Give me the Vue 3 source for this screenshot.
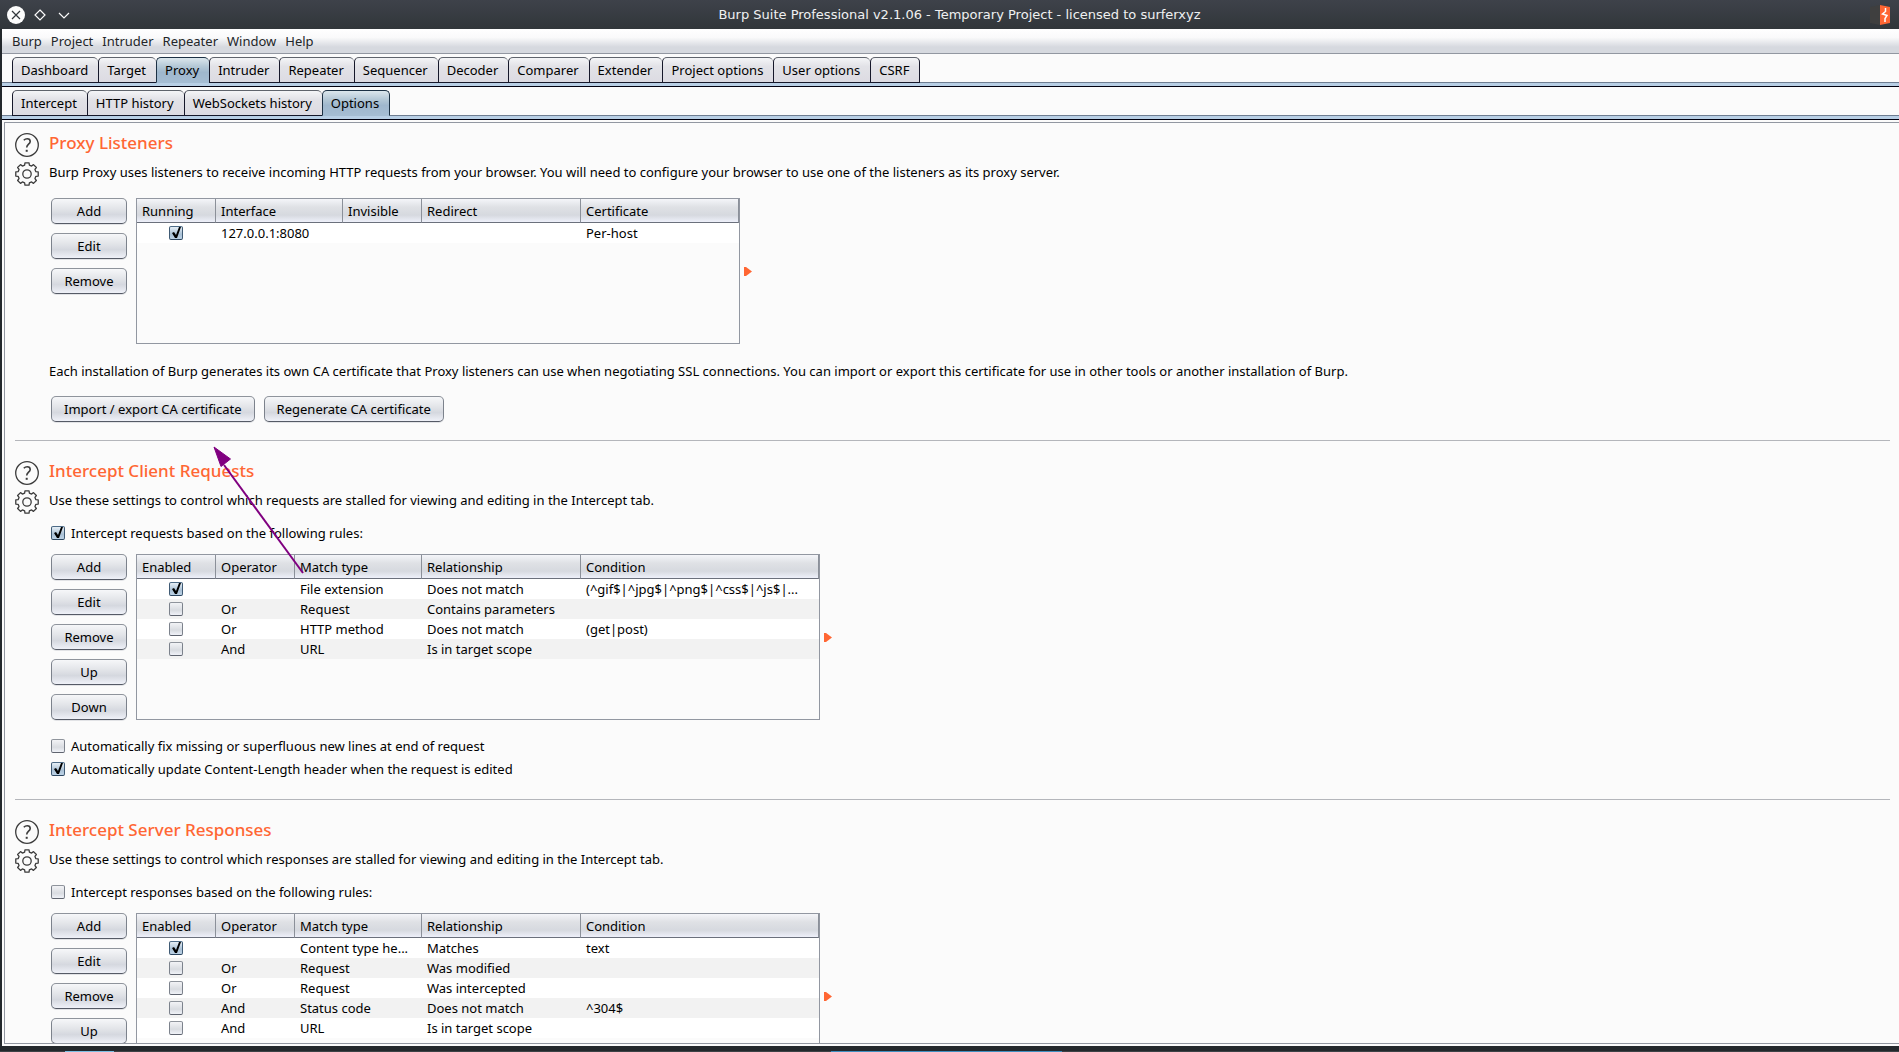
<script setup>
import { ref } from 'vue'

const menus = ['Burp', 'Project', 'Intruder', 'Repeater', 'Window', 'Help']
const tools = ['Dashboard', 'Target', 'Proxy', 'Intruder', 'Repeater', 'Sequencer', 'Decoder', 'Comparer', 'Extender', 'Project options', 'User options', 'CSRF']
const proxyTabs = ['Intercept', 'HTTP history', 'WebSockets history', 'Options']
const activeTool = ref('Proxy')
const activeProxyTab = ref('Options')

const ruleColumns = [
  { name: 'Enabled', size: 'c79' },
  { name: 'Operator', size: 'c79' },
  { name: 'Match type', size: 'c127' },
  { name: 'Relationship', size: 'c159' },
  { name: 'Condition', size: 'rest' }
]

const sections = ref([
  {
    id: 'listeners',
    title: 'Proxy Listeners',
    text: 'Burp Proxy uses listeners to receive incoming HTTP requests from your browser. You will need to configure your browser to use one of the listeners as its proxy server.',
    buttons: ['Add', 'Edit', 'Remove'],
    columns: [
      { name: 'Running', size: 'c79' },
      { name: 'Interface', size: 'c127' },
      { name: 'Invisible', size: 'c79' },
      { name: 'Redirect', size: 'c159' },
      { name: 'Certificate', size: 'rest' }
    ],
    rows: [{ on: true, cells: ['127.0.0.1:8080', '', '', 'Per-host'] }],
    note: 'Each installation of Burp generates its own CA certificate that Proxy listeners can use when negotiating SSL connections. You can import or export this certificate for use in other tools or another installation of Burp.',
    actions: ['Import / export CA certificate', 'Regenerate CA certificate']
  },
  {
    id: 'requests',
    title: 'Intercept Client Requests',
    text: 'Use these settings to control which requests are stalled for viewing and editing in the Intercept tab.',
    toggle: { label: 'Intercept requests based on the following rules:', on: true },
    buttons: ['Add', 'Edit', 'Remove', 'Up', 'Down'],
    columns: ruleColumns,
    rows: [
      { on: true, cells: ['', 'File extension', 'Does not match', '(^gif$|^jpg$|^png$|^css$|^js$|...'] },
      { on: false, cells: ['Or', 'Request', 'Contains parameters', ''] },
      { on: false, cells: ['Or', 'HTTP method', 'Does not match', '(get|post)'] },
      { on: false, cells: ['And', 'URL', 'Is in target scope', ''] }
    ],
    options: [
      { label: 'Automatically fix missing or superfluous new lines at end of request', on: false },
      { label: 'Automatically update Content-Length header when the request is edited', on: true }
    ]
  },
  {
    id: 'responses',
    title: 'Intercept Server Responses',
    text: 'Use these settings to control which responses are stalled for viewing and editing in the Intercept tab.',
    toggle: { label: 'Intercept responses based on the following rules:', on: false },
    buttons: ['Add', 'Edit', 'Remove', 'Up'],
    columns: ruleColumns,
    rows: [
      { on: true, cells: ['', 'Content type he...', 'Matches', 'text'] },
      { on: false, cells: ['Or', 'Request', 'Was modified', ''] },
      { on: false, cells: ['Or', 'Request', 'Was intercepted', ''] },
      { on: false, cells: ['And', 'Status code', 'Does not match', '^304$'] },
      { on: false, cells: ['And', 'URL', 'Is in target scope', ''] }
    ]
  }
])

// Outline of an eight-toothed cog centred on 12,12
const cog = (() => {
  const points = []
  for (let i = 0; i < 8; i++) {
    const a = (i * Math.PI) / 4
    for (const [r, d] of [[9.2, -0.26], [11.4, -0.18], [11.4, 0.18], [9.2, 0.26]]) {
      points.push(`${(12 + r * Math.sin(a + d)).toFixed(2)},${(12 - r * Math.cos(a + d)).toFixed(2)}`)
    }
  }
  return points.join(' ')
})()
</script>

<template>
  <div class="desktop">
    <header class="titlebar">
      <div class="controls">
        <button type="button" aria-label="Close">
          <svg width="18" height="18" viewBox="0 0 18 18"><circle cx="9" cy="9" r="9" fill="#fcfcfc" /><path d="M5 5l8 8M13 5l-8 8" stroke="#31363b" stroke-width="1.2" /></svg>
        </button>
        <button type="button" aria-label="Maximize">
          <svg width="18" height="18" viewBox="0 0 18 18"><path d="M9 4l5 5-5 5-5-5z" fill="none" stroke="#fcfcfc" stroke-width="1.2" /></svg>
        </button>
        <button type="button" aria-label="Minimize">
          <svg width="18" height="18" viewBox="0 0 18 18"><path d="M4 7l5 5 5-5" fill="none" stroke="#fcfcfc" stroke-width="1.2" /></svg>
        </button>
      </div>
      <div class="caption">Burp Suite Professional v2.1.06 - Temporary Project - licensed to surferxyz</div>
      <svg class="logo" width="20" height="20" viewBox="0 0 20 20">
        <path d="M0 2l10-2v20L0 18z" fill="#3f3f3f" />
        <path d="M10 0l10 2v16l-10 2z" fill="#ff6633" />
        <path d="M15.500 3v3.500L12.500 9l4.500 1.500-2 3V17" fill="none" stroke="#fff" stroke-width="1.500" />
      </svg>
    </header>

    <div class="window">
      <nav class="menubar">
        <button v-for="m in menus" :key="m" type="button">{{ m }}</button>
      </nav>

      <div class="tabs">
        <button v-for="t in tools" :key="t" type="button" :class="{ active: t === activeTool }" @click="activeTool = t">{{ t }}</button>
      </div>
      <div class="tabs">
        <button v-for="t in proxyTabs" :key="t" type="button" :class="{ active: t === activeProxyTab }" @click="activeProxyTab = t">{{ t }}</button>
      </div>

      <main class="pane">
        <section v-for="s in sections" :key="s.id" :class="['section', s.id]">
          <div class="icons">
            <button type="button" aria-label="Help">
              <svg width="24" height="24" viewBox="0 0 24 24" fill="none" stroke="#3c3c3c">
                <circle cx="12" cy="12" r="11.3" stroke-width="1.3" />
                <path d="M8.8 7.2C9.8 6.2 11 5.800 12.200 5.800c1.900 0 3 1 3 2.600 0 2.700-3.500 3-3.500 6.200" stroke-width="1.600" />
                <path d="M11.700 16.800v2" stroke-width="2" />
              </svg>
            </button>
            <button type="button" aria-label="Options">
              <svg width="24" height="24" viewBox="0 0 24 24" fill="none" stroke="#3c3c3c" stroke-width="1.300">
                <polygon :points="cog" stroke-linejoin="round" />
                <circle cx="12" cy="12" r="4.200" />
              </svg>
            </button>
          </div>

          <div class="body">
            <h2>{{ s.title }}</h2>
            <p class="intro">{{ s.text }}</p>

            <label v-if="s.toggle" class="check toggle"><input v-model="s.toggle.on" type="checkbox">{{ s.toggle.label }}</label>

            <div class="editor">
              <div class="stack">
                <button v-for="b in s.buttons" :key="b" type="button" class="btn">{{ b }}</button>
              </div>
              <div class="grid">
                <table>
                  <thead>
                    <tr><th v-for="c in s.columns" :key="c.name" :class="c.size" scope="col">{{ c.name }}</th></tr>
                  </thead>
                  <tbody>
                    <tr v-for="(r, i) in s.rows" :key="i">
                      <td class="tick"><input v-model="r.on" type="checkbox" :aria-label="s.columns[0].name + ' ' + (i + 1)"></td>
                      <td v-for="(c, j) in r.cells" :key="j">{{ c }}</td>
                    </tr>
                  </tbody>
                </table>
              </div>
              <svg class="expand" width="8" height="9" viewBox="0 0 8 9"><path d="M0 0h2l6 4.500L2 9H0z" fill="#ff6633" /></svg>
            </div>

            <p v-if="s.note" class="note">{{ s.note }}</p>
            <div v-if="s.actions" class="actions">
              <button v-for="a in s.actions" :key="a" type="button" class="btn">{{ a }}</button>
            </div>
            <div v-if="s.options" class="options">
              <label v-for="o in s.options" :key="o.label" class="check"><input v-model="o.on" type="checkbox">{{ o.label }}</label>
            </div>
          </div>
        </section>
      </main>

      <svg class="pointer" width="100" height="132" viewBox="0 0 100 132">
        <path d="M14 20L93 128" stroke="#800080" stroke-width="2" />
        <path d="M4 2l16.500 12L11 21.500z" fill="#800080" stroke="#800080" />
      </svg>
    </div>

    <footer class="taskbar"><i class="task launcher"></i><i class="task current"></i></footer>
  </div>
</template>

<style>
body {
  margin: 0;
}
</style>

<style scoped>
* {
  box-sizing: border-box;
}
button {
  margin: 0;
  padding: 0;
  border: 0;
  background: none;
  font: inherit;
  color: inherit;
  white-space: nowrap;
}
svg {
  display: block;
}
h2,
p {
  margin: 0;
}
.desktop {
  display: flex;
  flex-direction: column;
  height: 100vh;
  overflow: hidden;
  background: #23282c;
  color: #000;
  font: 13px/20px "Noto Sans", sans-serif;
}

/* title bar */
.titlebar {
  flex: none;
  display: grid;
  grid-template-columns: 1fr auto 1fr;
  align-items: center;
  height: 29px;
  padding: 0 9px 0 7px;
  background: linear-gradient(#3e424a, #31363a);
  color: #eff0f1;
}
.controls {
  display: flex;
  gap: 6px;
}
.caption {
  padding-left: 22px;
  font: 13px/20px "DejaVu Sans", sans-serif;
}
.logo {
  justify-self: end;
}

/* window frame */
.window {
  position: relative;
  flex: 1;
  min-height: 0;
  display: flex;
  flex-direction: column;
  margin-left: 2px;
  padding-bottom: 2px;
  background: #fbfbfb;
}
.menubar {
  flex: none;
  display: flex;
  gap: 9px;
  height: 25px;
  padding: 2px 10px;
  border-bottom: 1px solid #9297a1;
  background: linear-gradient(#fff, #fafafb 35%, #d6d9df 75%, #d6d9df);
  color: #232629;
}

/* tab strips */
.tabs {
  flex: none;
  display: flex;
  height: 33px;
  padding: 3px 10px 0;
  background: linear-gradient(#fbfbfb 28px, #6e7d91 28px, #6e7d91 29px, #b8cfe5 29px, #b8cfe5 32px, #00000f 32px);
}
.tabs button {
  height: 26px;
  padding: 0 10px 0 8px;
  border: 1px solid #16182a;
  border-top-color: #5f646c;
  border-right-width: 0;
  border-radius: 5px 5px 0 0;
  background: linear-gradient(#f4f5f7, #e2e2e7 35%, #dcdbe2);
  line-height: 24px;
}
.tabs button:last-child {
  border-right-width: 1px;
}
.tabs button.active {
  border-color: #1c3144;
  border-bottom-color: #a5bdd3;
  background: linear-gradient(#dbe6ec, #b4c8d6 35%, #9fb7cd 60%, #a5bdd3);
}

/* option sections */
.pane {
  flex: 1;
  min-height: 0;
  overflow: hidden;
  margin: 2px 0 0 2px;
  padding: 10px 9px 0 10px;
  border: 1px solid #9297a1;
  border-right: 0;
}
.section {
  display: flex;
  gap: 10px;
  margin-bottom: 20px;
  padding-bottom: 18px;
  border-bottom: 1px solid #b4b6bb;
}
.section.requests {
  padding-bottom: 20px;
}
.icons {
  flex: none;
  display: flex;
  flex-direction: column;
  gap: 5px;
}
.body {
  flex: 1;
  min-width: 0;
}
h2 {
  color: #ff6633;
  font: 500 17px/20px "Noto Sans", sans-serif;
}
.intro {
  margin: 9px 0 0;
}
.check {
  display: flex;
  align-items: center;
  gap: 6px;
  width: fit-content;
  margin-left: 2px;
}
.toggle {
  margin-top: 13px;
  margin-bottom: -5px;
}
.editor {
  display: flex;
  align-items: stretch;
  margin: 16px 0 0 2px;
}
.stack {
  flex: none;
  display: flex;
  flex-direction: column;
  gap: 9px;
  width: 76px;
  margin-right: 9px;
}
.btn {
  height: 26px;
  padding: 0 12px;
  border: 1px solid #7c828c;
  border-color: #8f949c #7c828c #555a66;
  border-radius: 5px;
  background: linear-gradient(#f6f7f9, #e3e5e9 40%, #d5d8df 65%, #eff1f8);
  box-shadow: 0 1px 0 #e2e3e6;
  line-height: 24px;
}
.stack .btn {
  padding: 0;
}
.grid {
  flex: none;
  width: 684px;
  min-height: 166px;
  border: 1px solid #9297a1;
}
.listeners .grid {
  width: 604px;
  min-height: 146px;
}
table {
  width: 100%;
  table-layout: fixed;
  border-collapse: separate;
  border-spacing: 0;
}
th {
  height: 24px;
  padding: 0 0 0 5px;
  border-right: 1px solid #8b9099;
  border-bottom: 1px solid #6b707c;
  background: linear-gradient(#f4f5f9, #dfe1e5 35%, #d6d9df 70%, #eef0fa);
  font-weight: 400;
  line-height: 20px;
  text-align: left;
}
td {
  height: 20px;
  padding: 0 0 0 5px;
  line-height: 20px;
  white-space: nowrap;
}
tbody tr {
  background: #fff;
}
tbody tr:nth-child(even) {
  background: #f2f2f2;
}
.tick {
  padding: 0 1px 0 0;
}
.c79 {
  width: 79px;
}
.c127 {
  width: 127px;
}
.c159 {
  width: 159px;
}
input[type="checkbox"] {
  appearance: none;
  display: block;
  flex: none;
  width: 14px;
  height: 14px;
  margin: 0;
  border: 1px solid #7c828c;
  border-color: #8f949c #7c828c #5f646f;
  border-radius: 2px;
  background: linear-gradient(#f2f3f6, #d9dce1 60%, #f0f2f8);
}
.tick input[type="checkbox"] {
  margin: 0 auto;
}
input[type="checkbox"]:checked {
  border-color: #4d6b87 #3f5a74 #2c4660;
  background: linear-gradient(#e6eff6, #a9c0d5 60%, #bdd3e6);
}
input[type="checkbox"]:checked::before {
  content: "";
  display: block;
  width: 12px;
  height: 12px;
  background: #000;
  clip-path: polygon(2px 6px, 4px 5px, 6px 8px, 9px 0, 11px 0, 7px 11px, 5px 11px);
}
.expand {
  flex: none;
  align-self: center;
  margin-left: 4px;
}
.note {
  margin-top: 17px;
}
.actions {
  display: flex;
  gap: 9px;
  margin: 15px 0 0 2px;
}
.options {
  display: flex;
  flex-direction: column;
  gap: 3px;
  margin-top: 16px;
}

/* annotation arrow over the page */
.pointer {
  position: absolute;
  left: 208px;
  top: 416px;
  pointer-events: none;
}

/* visible edge of the desktop panel */
.taskbar {
  flex: none;
  display: flex;
  height: 6px;
  padding-left: 65px;
  background: linear-gradient(#23282c 5px, #3d4246 5px);
}
.task {
  align-self: flex-end;
  height: 1px;
}
.launcher {
  width: 49px;
  margin-right: 717px;
  background: #7cc0e4;
}
.current {
  width: 231px;
  background: #3f8fc0;
}
</style>
